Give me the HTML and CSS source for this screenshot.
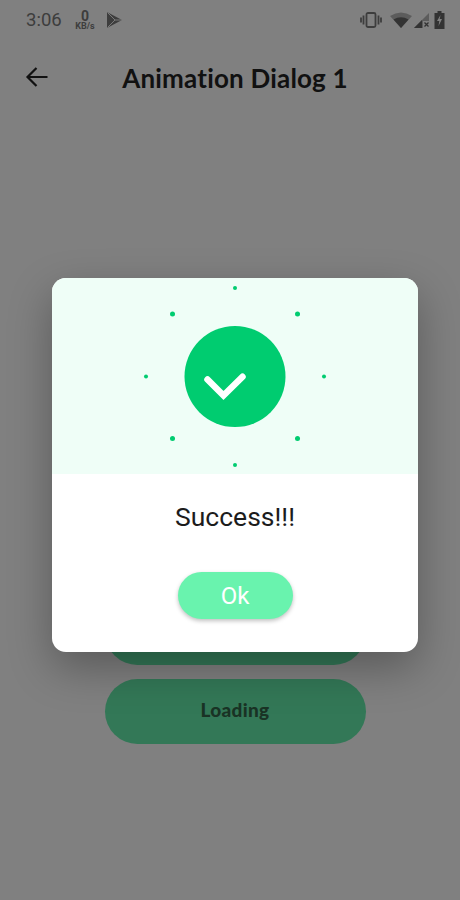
FILE: index.html
```html
<!DOCTYPE html>
<html lang="en">
  <head>
    <meta charset="UTF-8" />
    <meta name="viewport" content="width=device-width, initial-scale=1.0" />
    <title>Animation Dialog 1</title>
    <link rel="stylesheet" href="styles.css">
  </head>
  <body>
    <div class="screen">
      <div class="status-bar">
        <span class="status-time">3:06</span>
        <div class="status-speed">
          <span class="speed-value">0</span>
          <span class="speed-unit">KB/s</span>
        </div>
        <svg class="status-play" width="15" height="16" viewBox="0 0 15 16">
          <path d="M0 0 L15 8 L0 16 Z" fill="#3d3d3d" />
          <path d="M0.5 0.5 L8 8 L0.5 15.5 M8 8 H15" fill="none" stroke="#808080" stroke-width="0.9" />
        </svg>
        <div class="status-icons">
          <svg class="icon-vibrate" width="22" height="16" viewBox="0 0 22 16">
            <rect x="6.5" y="1" width="9" height="14" rx="1.5" fill="none" stroke="#3d3d3d" stroke-width="1.8" />
            <path d="M3.5 3.5 V12.5 M1 5.5 V10.5 M18.5 3.5 V12.5 M21 5.5 V10.5" stroke="#3d3d3d" stroke-width="1.8" />
          </svg>
          <svg class="icon-wifi" width="22" height="16" viewBox="0 0 22 16">
            <path d="M0 4 Q11 -3 22 4 L11 16 Z" fill="#5c5c5c" />
            <path d="M3.5 7.5 Q11 3 18.5 7.5 L11 16 Z" fill="#333" />
          </svg>
          <svg class="icon-signal" width="16" height="16" viewBox="0 0 16 16">
            <path d="M0 16 L15 1 V16 Z" fill="#5c5c5c" />
            <path d="M0 16 L8 8 V16 Z" fill="#333" />
            <rect x="9" y="9" width="7" height="7" fill="#808080" />
            <path d="M10.5 10.5 L14.5 14.5 M14.5 10.5 L10.5 14.5" stroke="#333" stroke-width="1.3" />
          </svg>
          <svg width="11" height="18" viewBox="0 0 11 18">
            <path d="M3.5 0 H7.5 V2 H10.5 V18 H0.5 V2 H3.5 Z" fill="#333" />
            <path d="M6.5 4 L3 10 H5.3 L4.5 15 L8 8 H5.7 Z" fill="#808080" />
          </svg>
        </div>
      </div>

      <div class="app-bar">
        <svg class="back-icon" width="24" height="24" viewBox="0 0 24 24">
          <path d="M22.5 12 H2.5 M11.5 3 L2.5 12 L11.5 21" fill="none" stroke="#111" stroke-width="2.2" />
        </svg>
        <h1 class="app-title">Animation Dialog 1</h1>
      </div>

      <div class="button-list">
        <button class="list-button">Success</button>
        <button class="list-button">Loading</button>
      </div>

      <div class="scrim">
        <div class="dialog">
          <div class="dialog-hero">
            <svg width="366" height="196" viewBox="0 0 366 196">
              <g fill="#00cc70">
                <circle cx="183" cy="98.5" r="50.5" />
                <circle cx="183" cy="10" r="2" />
                <circle cx="183" cy="187" r="2" />
                <circle cx="94" cy="98.5" r="2" />
                <circle cx="272" cy="98.5" r="2" />
                <circle cx="120.5" cy="36" r="2.5" />
                <circle cx="245.5" cy="36" r="2.5" />
                <circle cx="120.5" cy="160.5" r="2.5" />
                <circle cx="245.5" cy="160.5" r="2.5" />
              </g>
              <path d="M155.5 101.5 L171.5 117.5 L190.5 98.7" fill="none" stroke="#fff" stroke-width="6.5" stroke-linecap="round" />
            </svg>
          </div>
          <div class="dialog-body">
            <p class="dialog-message">Success!!!</p>
            <button class="ok-button">Ok</button>
          </div>
        </div>
      </div>
    </div>
  </body>
</html>
```

FILE: styles.css
```css
* {
  margin: 0;
  padding: 0;
  box-sizing: border-box;
}

body {
  font-family: "Roboto", sans-serif;
  background: #808080;
  overflow: hidden;
}

.screen {
  position: relative;
  display: flex;
  flex-direction: column;
  width: 460px;
  height: 900px;
  background: #808080;
}

.status-bar {
  display: flex;
  align-items: center;
  height: 40px;
  padding: 0 15px 0 26px;
  color: #3d3d3d;
}

.status-time {
  font-size: 18.5px;
  width: 49px;
}

.status-speed {
  display: flex;
  flex-direction: column;
  align-items: center;
  width: 20px;
  font-weight: 700;
}

.speed-value {
  font-size: 14px;
  line-height: 12px;
}

.speed-unit {
  font-size: 9px;
  line-height: 9px;
}

.status-play {
  margin-left: 12px;
}

.status-icons {
  display: flex;
  align-items: center;
  margin-left: auto;
}

.icon-vibrate {
  margin-right: 8px;
}

.icon-wifi {
  margin-right: 2px;
}

.icon-signal {
  margin-right: 4px;
}

.app-bar {
  position: relative;
  display: flex;
  justify-content: center;
  align-items: center;
  height: 76px;
  padding-left: 10px;
}

.back-icon {
  position: absolute;
  left: 25px;
  top: 25px;
}

.app-title {
  font-family: "Lato", sans-serif;
  font-size: 26px;
  font-weight: 700;
  letter-spacing: 0.2px;
  color: #111;
}

.button-list {
  flex: 1;
  display: flex;
  flex-direction: column;
  justify-content: flex-end;
  align-items: center;
  gap: 14px;
  padding-left: 10px;
  padding-bottom: 156px;
}

.list-button {
  width: 261px;
  height: 65px;
  padding-bottom: 4px;
  border: none;
  border-radius: 33px;
  background: #337857;
  font-family: "Lato", sans-serif;
  font-size: 19px;
  font-weight: 900;
  letter-spacing: 0.3px;
  color: #1a3325;
}

.scrim {
  position: absolute;
  top: 0;
  left: 0;
  width: 100%;
  height: 100%;
  display: flex;
  justify-content: center;
  align-items: flex-start;
  padding-top: 278px;
  padding-left: 10px;
}

.dialog {
  width: 366px;
  height: 374px;
  background: #fff;
  border-radius: 14px;
  overflow: hidden;
  box-shadow: 0 16px 44px rgba(0, 0, 0, 0.3);
}

.dialog-hero {
  display: flex;
  height: 196px;
  background: #effef7;
}

.dialog-body {
  display: flex;
  flex-direction: column;
  align-items: center;
  padding-top: 27px;
}

.dialog-message {
  font-size: 26.5px;
  line-height: 32px;
  color: #1c1c1c;
}

.ok-button {
  width: 115px;
  height: 47px;
  margin-top: 39px;
  padding-top: 1px;
  border: none;
  border-radius: 24px;
  background: #69f3ae;
  box-shadow: 0 2px 4px rgba(0, 0, 0, 0.25);
  font-family: "Roboto", sans-serif;
  font-size: 24px;
  color: #fff;
}
```
